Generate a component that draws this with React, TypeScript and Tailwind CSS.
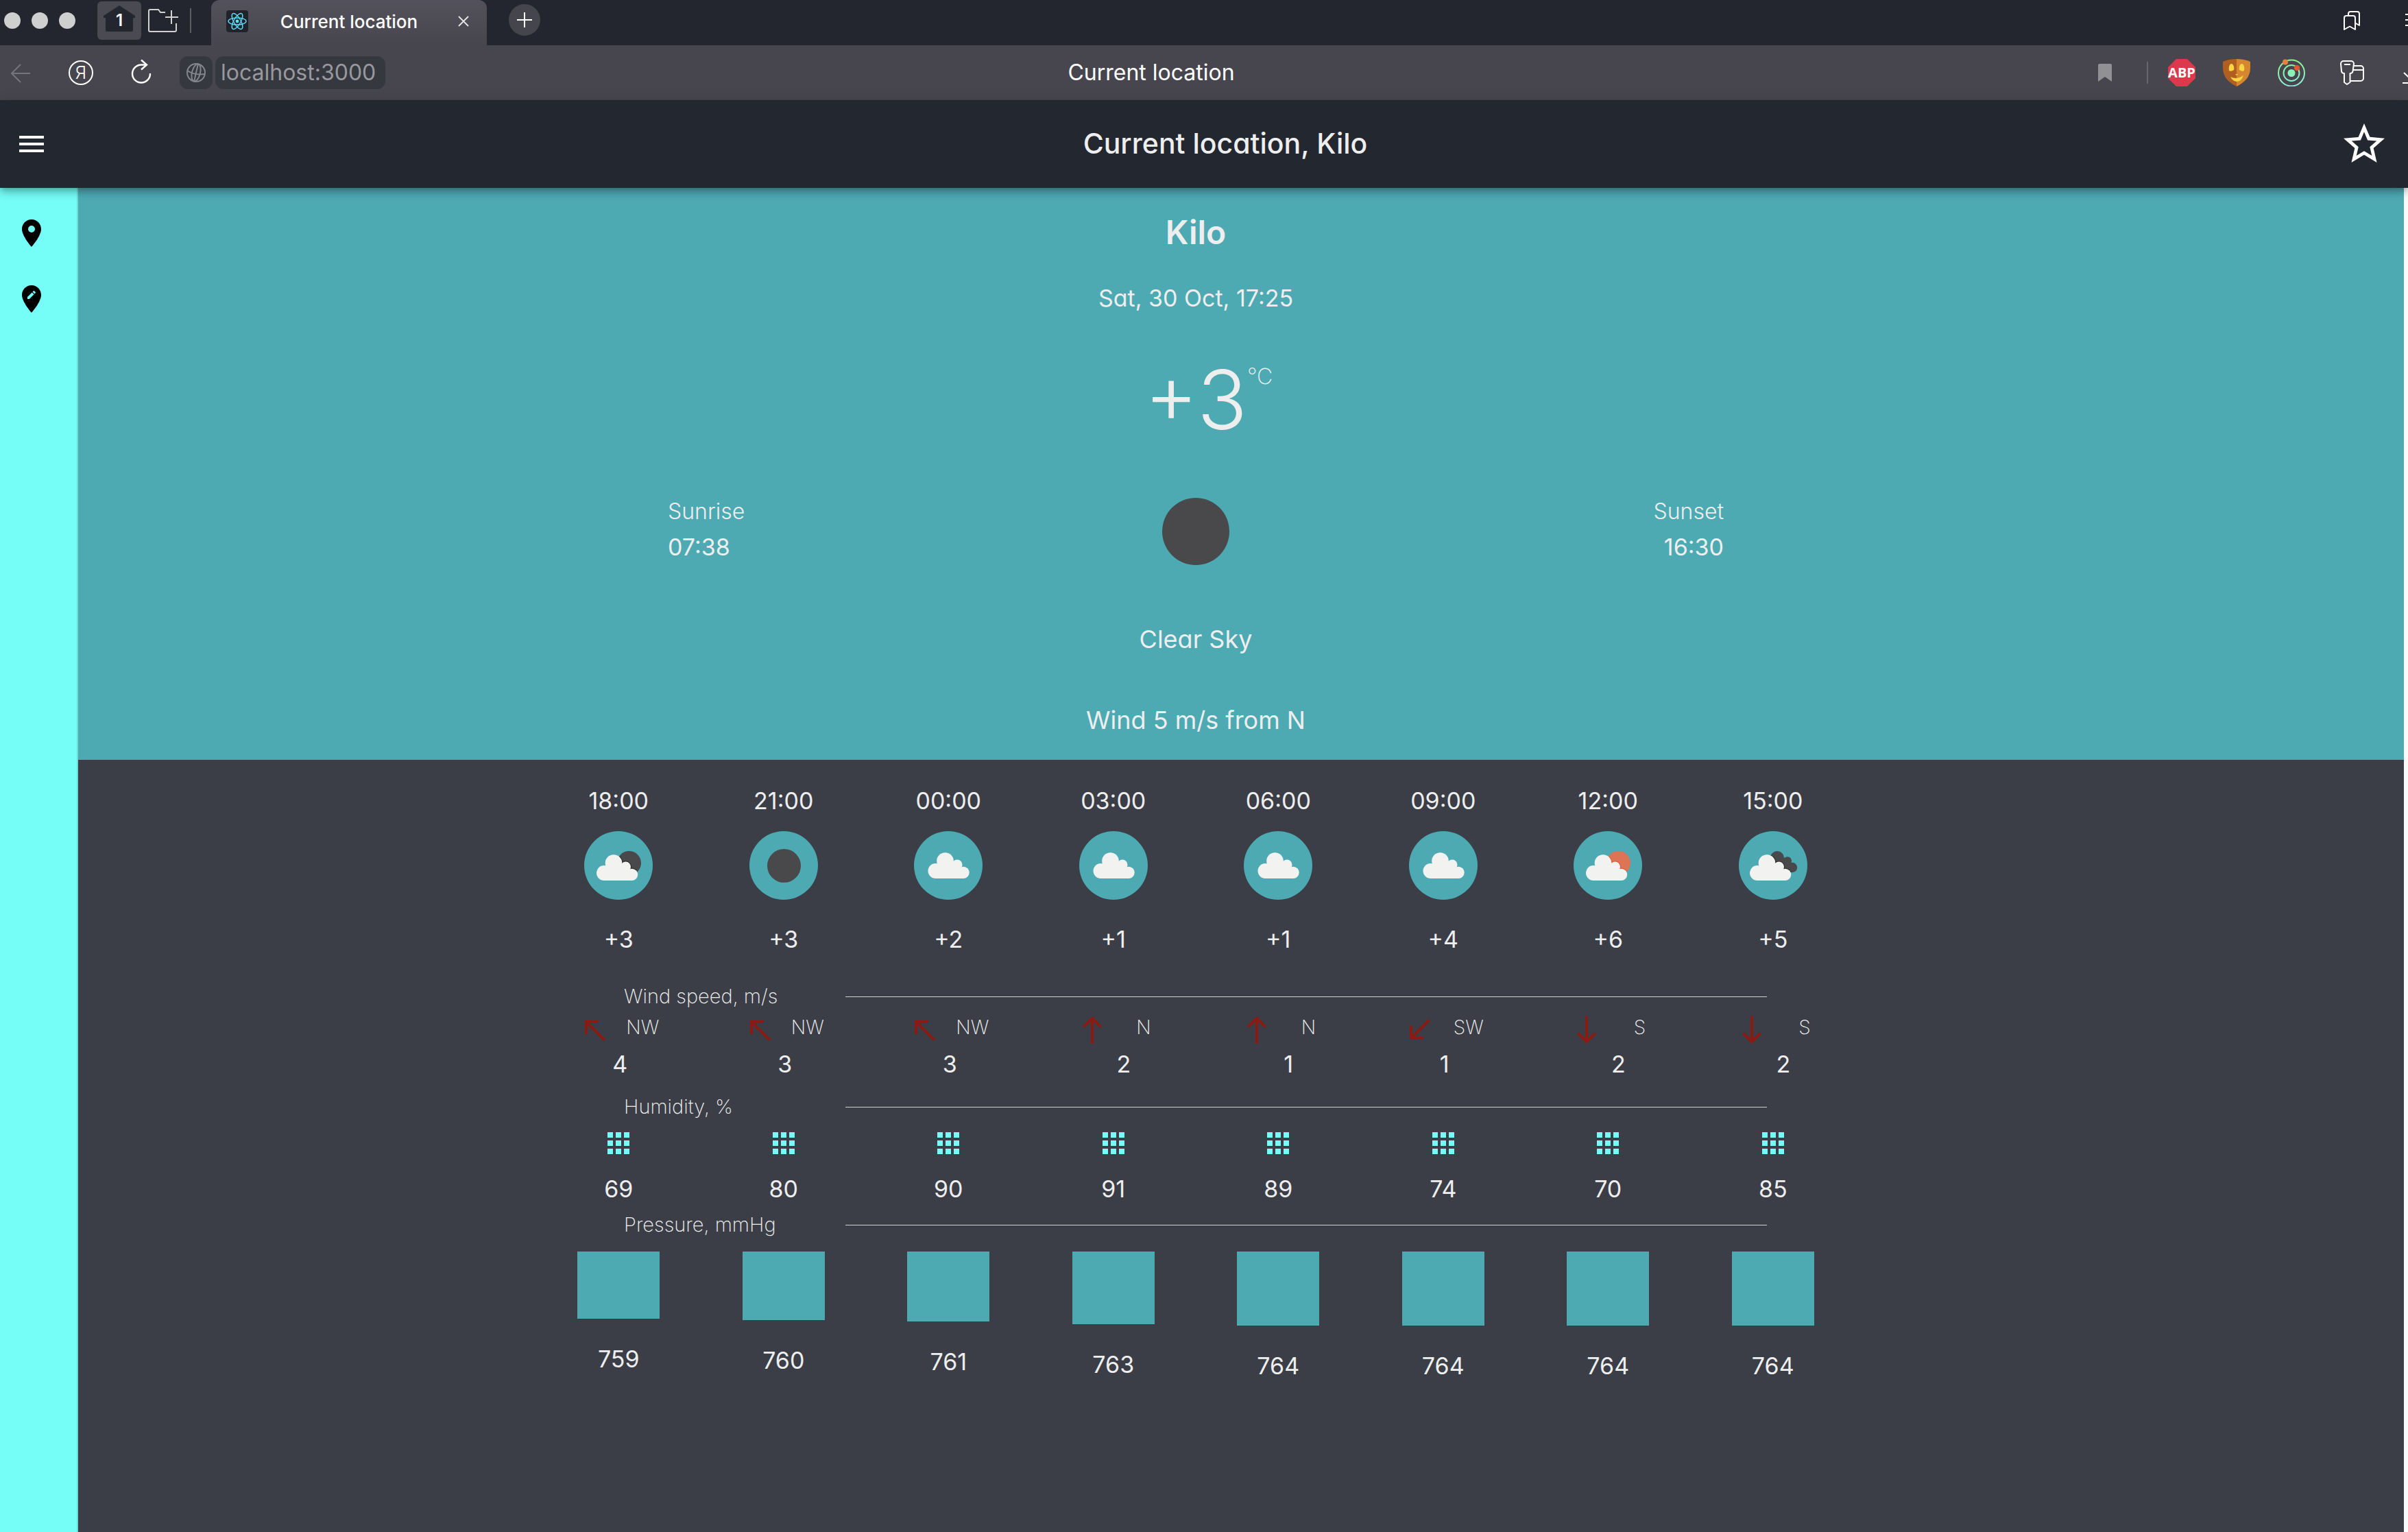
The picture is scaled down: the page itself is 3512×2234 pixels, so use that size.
import React from "react";
import type { IconType } from "react-icons";
import {
  MdApps,
  MdEditLocation,
  MdMenu,
  MdNorth,
  MdNorthWest,
  MdPlace,
  MdSouth,
  MdSouthWest,
  MdStarBorder,
} from "react-icons/md";

type Sky = "moonCloud" | "night" | "cloud" | "sunCloud" | "clouds";

interface Slot {
  time: string;
  sky: Sky;
  temp: string;
  dir: "N" | "NW" | "SW" | "S";
  wind: number;
  humidity: number;
  pressure: number;
}

const SLOTS: Slot[] = [
  { time: "18:00", sky: "moonCloud", temp: "+3", dir: "NW", wind: 4, humidity: 69, pressure: 759 },
  { time: "21:00", sky: "night", temp: "+3", dir: "NW", wind: 3, humidity: 80, pressure: 760 },
  { time: "00:00", sky: "cloud", temp: "+2", dir: "NW", wind: 3, humidity: 90, pressure: 761 },
  { time: "03:00", sky: "cloud", temp: "+1", dir: "N", wind: 2, humidity: 91, pressure: 763 },
  { time: "06:00", sky: "cloud", temp: "+1", dir: "N", wind: 1, humidity: 89, pressure: 764 },
  { time: "09:00", sky: "cloud", temp: "+4", dir: "SW", wind: 1, humidity: 74, pressure: 764 },
  { time: "12:00", sky: "sunCloud", temp: "+6", dir: "S", wind: 2, humidity: 70, pressure: 764 },
  { time: "15:00", sky: "clouds", temp: "+5", dir: "S", wind: 2, humidity: 85, pressure: 764 },
];

const ARROWS: Record<Slot["dir"], IconType> = {
  N: MdNorth,
  NW: MdNorthWest,
  SW: MdSouthWest,
  S: MdSouth,
};

function CloudShape() {
  return (
    <>
      <circle cx="29" cy="61" r="11" />
      <circle cx="43" cy="46.5" r="12.3" />
      <circle cx="60.5" cy="52" r="7.5" />
      <circle cx="69.5" cy="63.4" r="8.7" />
      <path d="M29 55 L34 46 H53 L62 50 L70 60 V72.1 H29 Z" />
    </>
  );
}

function BackShape({ sky }: { sky: Sky }) {
  if (sky === "clouds") {
    return (
      <>
        <circle cx="56" cy="39" r="10" />
        <circle cx="71" cy="43.3" r="6" />
        <circle cx="78" cy="53" r="7.2" />
        <path d="M56 42 L66 38 L78 48 V60 H56 Z" />
      </>
    );
  }
  return <circle cx="65.5" cy="46.5" r="17.5" />;
}

function SkyIcon({ sky }: { sky: Sky }) {
  const id = `back-${sky}`;
  const layered = sky === "moonCloud" || sky === "sunCloud" || sky === "clouds";
  const back = sky === "sunCloud" ? "#dd7455" : "#49494b";
  const edge = sky === "sunCloud" ? "#d65a35" : "#2b2b2d";
  return (
    <svg viewBox="0 0 100 100" className="mx-auto size-[100px]" role="img" aria-label={sky}>
      <circle cx="50" cy="50" r="50" fill="#4daab3" />
      {sky === "night" && <circle cx="50.5" cy="50.5" r="24.5" fill="#49494b" />}
      {sky === "cloud" && (
        <g fill="#f2f2f0" transform="translate(2.5 -3)">
          <CloudShape />
        </g>
      )}
      {layered && (
        <>
          <clipPath id={id}>
            <BackShape sky={sky} />
          </clipPath>
          <g fill={back}>
            <BackShape sky={sky} />
          </g>
          <g clipPath={`url(#${id})`} fill={edge} stroke={edge} strokeWidth="2">
            <g transform={sky === "clouds" ? "translate(-2 0)" : undefined}>
              <CloudShape />
            </g>
          </g>
          <g fill="#f2f2f0" transform={sky === "clouds" ? "translate(-2 0)" : undefined}>
            <CloudShape />
          </g>
        </>
      )}
    </svg>
  );
}

function TabStrip() {
  return (
    <div className="flex h-[66px] items-start overflow-hidden bg-[#24262f]">
      <div className="mt-[18px] ml-[6px] flex gap-4">
        <span className="size-6 rounded-full bg-[#d0cfd0]" />
        <span className="size-6 rounded-full bg-[#d0cfd0]" />
        <span className="size-6 rounded-full bg-[#d0cfd0]" />
      </div>
      <button
        aria-label="Home, 1 tab"
        className="relative mt-[2px] ml-8 h-14 w-16 rounded-[6px] bg-[#4a4a53]"
      >
        <svg viewBox="0 0 64 56" className="h-14 w-16" aria-hidden="true">
          <path d="M32 6 L55 21 V24 H52 V42 a2 2 0 0 1 -2 2 H14 a2 2 0 0 1 -2 -2 V24 H9 V21 Z" fill="#24262f" />
        </svg>
        <span className="absolute inset-x-0 top-[14px] text-center text-[24px] leading-7 font-semibold text-white">
          1
        </span>
      </button>
      <button aria-label="New group" className="mt-3 ml-2">
        <svg viewBox="0 0 48 36" className="h-9 w-12" fill="none" stroke="#d2d2d5" strokeWidth="2" aria-hidden="true">
          <path d="M27 6 H20 L17 2 H5 a2 2 0 0 0 -2 2 V32 a2 2 0 0 0 2 2 H41 a2 2 0 0 0 2 -2 V22" />
          <path d="M36 3 V23 M27 13 H46" />
        </svg>
      </button>
      <span className="mt-3 ml-[15px] h-9 w-[2px] bg-[#5b5c64]" />
      <div className="ml-[29px] flex h-[66px] w-[402px] items-center rounded-t-[12px] bg-linear-to-b from-[#53525c] to-[#47464e] pr-[26px] pb-1 pl-[22px]">
        <svg viewBox="0 0 32 32" className="size-8" fill="none" stroke="#61dafb" strokeWidth="1.4" aria-hidden="true">
          <rect width="32" height="32" rx="4" fill="#20232a" stroke="none" />
          <ellipse cx="16" cy="16" rx="13" ry="5" />
          <ellipse cx="16" cy="16" rx="13" ry="5" transform="rotate(60 16 16)" />
          <ellipse cx="16" cy="16" rx="13" ry="5" transform="rotate(120 16 16)" />
          <circle cx="16" cy="16" r="2.4" fill="#61dafb" stroke="none" />
        </svg>
        <span className="flex-1 pr-3 text-center text-[26px] font-medium text-white">
          Current location
        </span>
        <button aria-label="Close tab">
          <svg viewBox="0 0 16 16" className="size-4" stroke="#e6e6e8" strokeWidth="1.8" aria-hidden="true">
            <path d="M1 1 L15 15 M15 1 L1 15" />
          </svg>
        </button>
      </div>
      <button aria-label="New tab" className="mt-[6px] ml-8 flex size-[46px] items-center justify-center rounded-full bg-[#45454e]">
        <svg viewBox="0 0 24 24" className="size-6" stroke="#ffffff" strokeWidth="2" aria-hidden="true">
          <path d="M12 1 V23 M1 12 H23" />
        </svg>
      </button>
      <button aria-label="Bookmarks" className="mt-[14px] ml-auto">
        <svg viewBox="0 0 28 32" className="h-8 w-7" fill="none" stroke="#ffffff" strokeWidth="2" strokeLinejoin="round" aria-hidden="true">
          <path d="M3 12 a3 3 0 0 1 3 -3 H16 a3 3 0 0 1 3 3 V29 L11 24.5 L3 29 Z" />
          <path d="M9 9 V6 a3 3 0 0 1 3 -3 H22 a3 3 0 0 1 3 3 V23 L19 19.5" />
        </svg>
      </button>
      <button aria-label="Menu" className="mt-[18px] -mr-6 ml-16">
        <svg viewBox="0 0 28 22" className="h-[22px] w-7" stroke="#ffffff" strokeWidth="2" aria-hidden="true">
          <path d="M0 3 H28 M0 11 H28 M0 19 H28" />
        </svg>
      </button>
    </div>
  );
}

function Toolbar() {
  return (
    <div className="flex h-20 items-center overflow-hidden bg-[#47464e] text-[32px]">
      <button aria-label="Back" className="ml-[14px]">
        <svg viewBox="0 0 32 32" className="size-8" fill="none" stroke="#75757c" strokeWidth="2" aria-hidden="true">
          <path d="M30 17 H3 M16 4 L3 17 L16 30" />
        </svg>
      </button>
      <button
        aria-label="Start page"
        className="ml-[54px] flex size-9 items-center justify-center rounded-full border-2 border-white text-[26px] leading-8 font-light text-white"
      >
        Я
      </button>
      <button aria-label="Reload" className="ml-[52px]">
        <svg viewBox="0 0 36 40" className="h-10 w-9" fill="none" stroke="#ffffff" strokeWidth="2.4" aria-hidden="true">
          <path d="M26 8.5 H18 A13 13 0 1 0 31 21" />
          <path d="M18 1.5 L26 8.5 L18 15.5" />
        </svg>
      </button>
      <button aria-label="Site information" className="ml-[38px] flex size-12 items-center justify-center rounded-[12px] bg-[#363840]">
        <svg viewBox="0 0 32 32" className="size-8" fill="none" stroke="#85868d" strokeWidth="2" aria-hidden="true">
          <circle cx="16" cy="16" r="13" />
          <ellipse cx="16" cy="16" rx="6" ry="13" transform="rotate(14 16 16)" />
          <path d="M3 13 Q14 20 29 18 M19 3 L13 29" />
        </svg>
      </button>
      <input
        aria-label="Address"
        defaultValue="localhost:3000"
        className="ml-1 h-12 w-[248px] rounded-[12px] bg-[#363840] pl-2 text-[32px] text-[#98989e] outline-none"
      />
      <div className="flex-1 pr-[264px] text-center text-[32px] text-white">Current location</div>
      <button aria-label="Bookmark page">
        <svg viewBox="0 0 20 26" className="h-[26px] w-5" aria-hidden="true">
          <path d="M2 0 H18 a2 2 0 0 1 2 2 V26 L10 19 L0 26 V2 a2 2 0 0 1 2 -2 Z" fill="#909095" />
        </svg>
      </button>
      <span className="ml-[51px] h-8 w-[2px] bg-[#66666d]" />
      <button aria-label="Ad blocker" className="relative ml-[29px]">
        <svg viewBox="0 0 40 40" className="size-10" aria-hidden="true">
          <path d="M12 0 H28 L40 12 V28 L28 40 H12 L0 28 V12 Z" fill="#dc394c" />
        </svg>
        <span className="absolute inset-0 text-center font-['Open_Sans',sans-serif] text-[20px] leading-10 font-bold text-white">
          ABP
        </span>
      </button>
      <button aria-label="Privacy shield" className="ml-10">
        <svg viewBox="0 0 40 40" className="size-10" aria-hidden="true">
          <path d="M20 0 Q9 0 0 4 V13 C0 26 8 34 20 40 Z" fill="#b05f20" />
          <path d="M20 0 Q31 0 40 4 V13 C40 26 32 34 20 40 Z" fill="#d5862f" />
          <path d="M9 17 C8 11 10 7 12.5 7 C15 7 17 12 16 16 Q12 19 9 17 Z" fill="#f8d646" />
          <path d="M31 17 C32 11 30 7 27.5 7 C25 7 23 12 24 16 Q28 19 31 17 Z" fill="#f8d646" />
          <path d="M18 22 H22 L20 24 Z" fill="#f8d646" />
          <path d="M11 26 Q20 31 30 24 Q27 33 20 33 Q14 32 11 26 Z" fill="#f8d646" />
        </svg>
      </button>
      <button aria-label="Tracking radar" className="ml-10">
        <svg viewBox="0 0 40 40" className="size-10" fill="none" aria-hidden="true">
          <linearGradient id="radar" x1="0" y1="0" x2="0" y2="40" gradientUnits="userSpaceOnUse">
            <stop offset="0" stopColor="#8df38a" />
            <stop offset="1" stopColor="#8aeee0" />
          </linearGradient>
          <circle cx="20" cy="20.5" r="19" stroke="url(#radar)" strokeWidth="2" />
          <circle cx="20" cy="20.5" r="11.5" stroke="url(#radar)" strokeWidth="2" />
          <circle cx="20" cy="20.5" r="5.5" fill="url(#radar)" />
          <circle cx="11" cy="4.5" r="4" fill="#e58142" />
          <circle cx="28" cy="13" r="4" fill="#e0592f" />
        </svg>
      </button>
      <button aria-label="Passwords and cards" className="ml-[49px]">
        <svg viewBox="0 0 40 40" className="size-10" fill="none" stroke="#ffffff" strokeWidth="2" strokeLinejoin="round" aria-hidden="true">
          <path d="M7 3 H18 a4 4 0 0 1 4 4 L20.5 18 a4 4 0 0 1 -4 3 V34 L12 37 L8 34 V21 a4 4 0 0 1 -4 -3 L3 7 a4 4 0 0 1 4 -4 Z" />
          <path d="M8 8 H17" />
          <path d="M21 10 H32 a4 4 0 0 1 4 4 V28 a4 4 0 0 1 -4 4 H17 M21 16 H36" />
        </svg>
      </button>
      <button aria-label="Downloads" className="-mr-6 ml-[53px]">
        <svg viewBox="0 0 32 40" className="h-10 w-8" fill="none" stroke="#ffffff" strokeWidth="2" aria-hidden="true">
          <path d="M2 20 L15 32 L28 20 M15 4 V32 M0 35 H30" />
        </svg>
      </button>
    </div>
  );
}

function AppHeader() {
  return (
    <header className="relative z-10 flex h-32 items-center bg-[#23272f] pr-7 pl-[22px] shadow-[0_4px_8px_-2px_rgba(0,0,0,0.2),0_8px_10px_rgba(0,0,0,0.14),0_2px_20px_rgba(0,0,0,0.12)]">
      <button aria-label="Open menu" className="text-white">
        <MdMenu className="size-12" />
      </button>
      <h1 className="flex-1 pl-[92px] text-center text-[41px] font-medium text-[#eeeeee]">
        Current location, Kilo
      </h1>
      <button aria-label="Add to favourites" className="text-white">
        <MdStarBorder className="size-[72px]" />
      </button>
    </header>
  );
}

function Sidebar() {
  return (
    <nav className="flex w-[114px] flex-col items-start gap-12 border-r-2 border-[#6bdcd8] bg-[#75fdf7] pt-[42px] pl-[22px] text-black">
      <a href="#current" aria-label="Current location">
        <MdPlace className="size-12" />
      </a>
      <a href="#choose" aria-label="Choose location">
        <MdEditLocation className="size-12" />
      </a>
    </nav>
  );
}

function Hero() {
  return (
    <section className="flex flex-col items-center bg-[#4daab3] pt-[33px] pr-[132px] pb-[34px] text-[34px] leading-[48px] text-[#eeeeee]">
      <h2 className="text-[48px] leading-[64px] font-semibold">Kilo</h2>
      <p className="mt-10">Sat, 30 Oct, 17:25</p>
      <p className="relative mt-16 text-[120px] leading-[120px] font-light">
        +3
        <span className="absolute top-[10px] left-full text-[32px] leading-8 font-extralight">°C</span>
      </p>
      <div className="mt-[77px] flex w-[1540px] items-end justify-between">
        <dl className="w-40 leading-[52px]">
          <dt className="text-[32px] font-light">Sunrise</dt>
          <dd>07:38</dd>
        </dl>
        <span role="img" aria-label="Clear night sky" className="size-[98px] rounded-full bg-[#49494b]" />
        <dl className="w-40 text-right leading-[52px]">
          <dt className="text-[32px] font-light">Sunset</dt>
          <dd>16:30</dd>
        </dl>
      </div>
      <p className="mt-[84px] text-[36px]">Clear Sky</p>
      <p className="mt-[70px] text-[36px]">Wind 5 m/s from N</p>
    </section>
  );
}

function Divider({ label, className }: { label: string; className: string }) {
  return (
    <tr>
      <th colSpan={8} scope="colgroup" className={className}>
        <div className="flex h-8 items-center pl-32 text-[29px] font-extralight">
          <span className="w-[323px] text-left">{label}</span>
          <span className="h-px w-[1344px] bg-[#cfcfcf]" />
        </div>
      </th>
    </tr>
  );
}

function Forecast() {
  return (
    <section className="flex flex-1 justify-center bg-[#3b3e46] pt-9 pr-[132px] text-[#eeeeee]">
      <table className="h-fit w-[1924px] table-fixed text-center text-[34px] leading-[48px]">
        <thead>
          <tr>
            {SLOTS.map((s) => (
              <th key={s.time} scope="col" className="p-0 font-normal">
                {s.time}
              </th>
            ))}
          </tr>
        </thead>
        <tbody>
          <tr>
            {SLOTS.map((s) => (
              <td key={s.time} className="pt-5">
                <SkyIcon sky={s.sky} />
              </td>
            ))}
          </tr>
          <tr>
            {SLOTS.map((s) => (
              <td key={s.time} className="pt-[34px]">
                {s.temp}
              </td>
            ))}
          </tr>
          <Divider label="Wind speed, m/s" className="pt-[43px]" />
          <tr>
            {SLOTS.map((s) => {
              const Arrow = ARROWS[s.dir];
              const width = s.dir.length === 1 ? "w-[110px]" : "w-[118px]";
              return (
                <td key={s.time} className="pt-[9px]">
                  <div className={`mx-auto flex h-12 items-start justify-between ${width}`}>
                    <Arrow className="size-12 text-[#8b1a12]" />
                    <span className="text-[28px] leading-10 font-extralight">{s.dir}</span>
                  </div>
                </td>
              );
            })}
          </tr>
          <tr>
            {SLOTS.map((s) => (
              <td key={s.time} className={s.dir.length === 1 ? "pt-[2px] pl-[30px]" : "pt-[2px] pl-1"}>
                {s.wind}
              </td>
            ))}
          </tr>
          <Divider label="Humidity, %" className="pt-[22px]" />
          <tr>
            {SLOTS.map((s) => (
              <td key={s.time} className="pt-[13px]">
                <MdApps className="mx-auto size-12 text-[#75fdf7]" />
              </td>
            ))}
          </tr>
          <tr>
            {SLOTS.map((s) => (
              <td key={s.time} className="pt-[19px]">
                {s.humidity}
              </td>
            ))}
          </tr>
          <Divider label="Pressure, mmHg" className="pt-3" />
          <tr>
            {SLOTS.map((s) => (
              <td key={s.time} className="pt-[23px] align-top">
                <div
                  className="mx-auto w-[120px] bg-[#4daab3]"
                  style={{ height: (s.pressure - 710) * 2 }}
                />
                <div className="mt-[35px]">{s.pressure}</div>
              </td>
            ))}
          </tr>
        </tbody>
      </table>
    </section>
  );
}

export default function App() {
  return (
    <div className="flex min-h-screen flex-col bg-[#3b3e46] font-['Inter',sans-serif]">
      <TabStrip />
      <Toolbar />
      <div className="flex flex-1 flex-col [font-feature-settings:'cv11']">
        <AppHeader />
        <div className="flex flex-1">
          <Sidebar />
          <main className="flex flex-1 flex-col">
            <Hero />
            <Forecast />
          </main>
          <div className="w-[6px] bg-[#fafafa]" />
        </div>
      </div>
    </div>
  );
}
